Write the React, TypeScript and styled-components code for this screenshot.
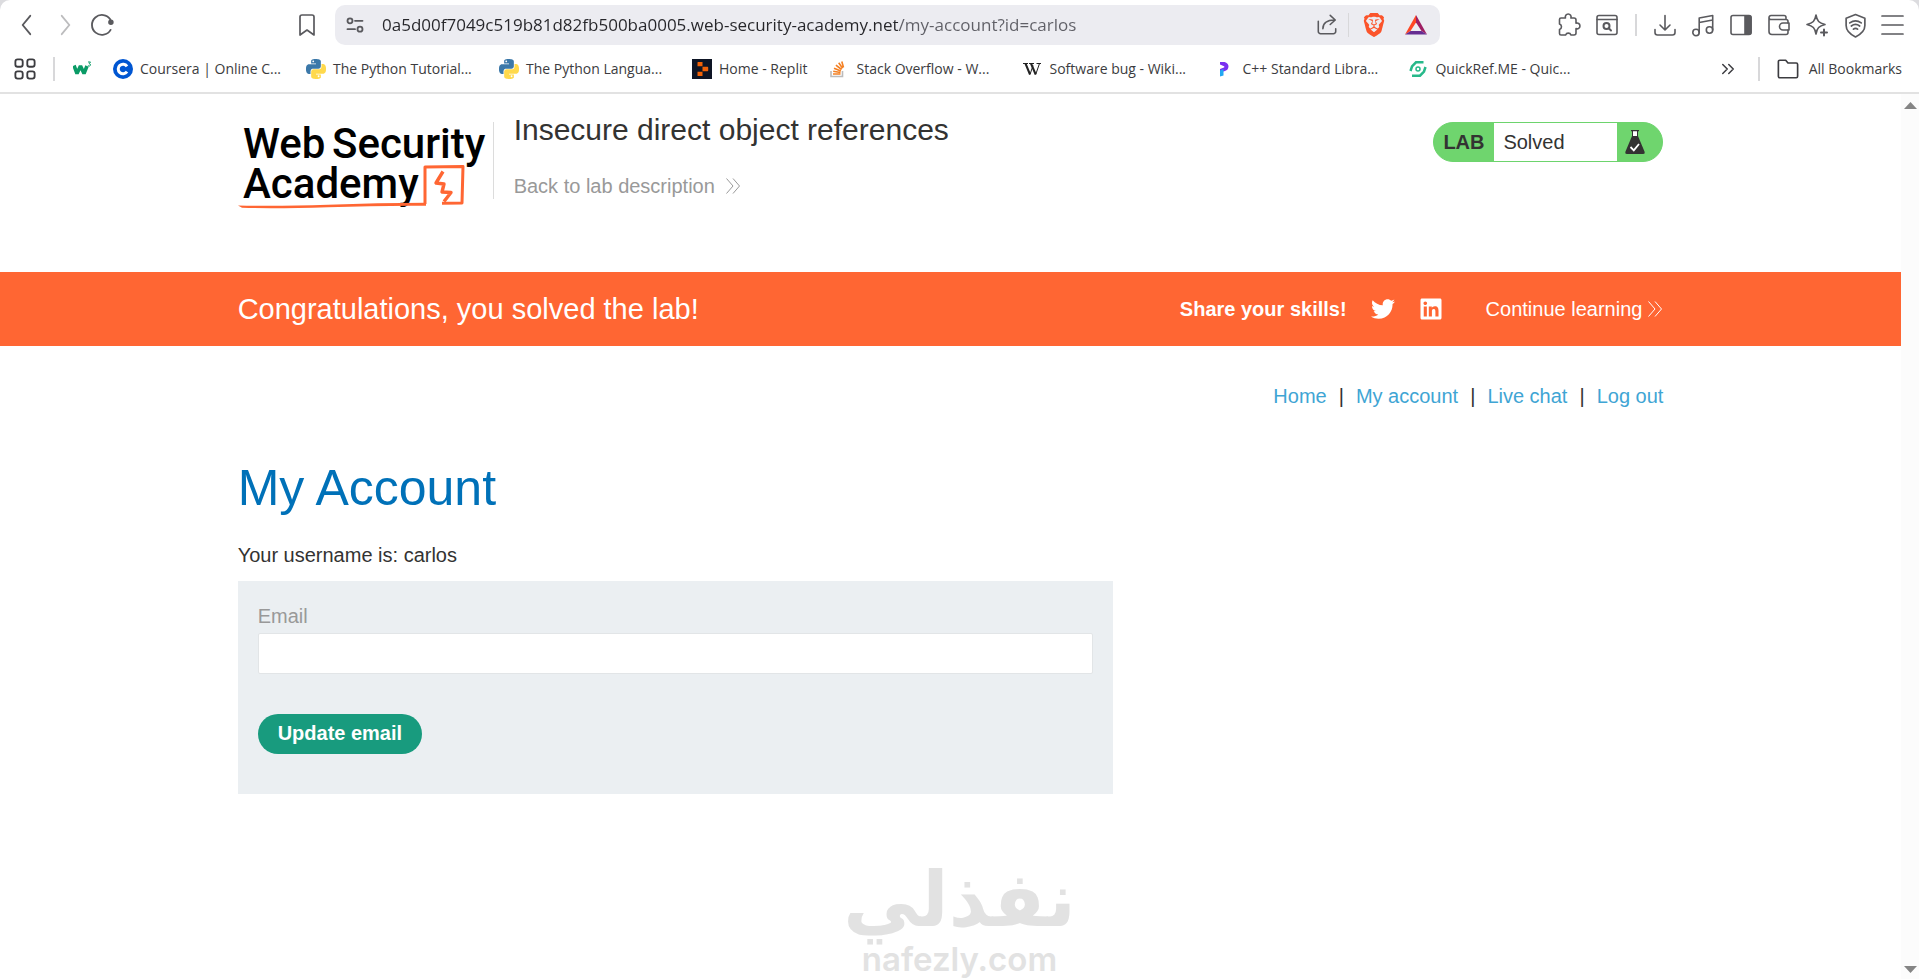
import React from 'react';
import styled, { createGlobalStyle } from 'styled-components';
import { FaTwitter, FaLinkedin } from 'react-icons/fa';
import { SiBrave } from 'react-icons/si';

const GlobalStyle = createGlobalStyle`
  *, *::before, *::after { box-sizing: border-box; }
  html, body { margin: 0; padding: 0; }
  body {
    background: #dcdcdf;
    color: #333332;
    font-family: "Liberation Sans", Arial, sans-serif;
    font-size: 20px;
    line-height: 24px;
  }
  button { font: inherit; border: 0; padding: 0; background: none; color: inherit; cursor: pointer; }
  a { text-decoration: none; color: inherit; }
  svg { display: block; flex: none; }
`;

const Window = styled.div`
  position: relative;
  min-height: 100vh;
  display: flex;
  flex-direction: column;
  background: #fff;
  border-radius: 10px 10px 0 0;
`;

/* ---------- browser chrome ---------- */

const Chrome = styled.header`
  border-bottom: 2px solid #e2e2e2;
  color: #5a5a5e;
  font-family: "Open Sans", "Noto Sans", sans-serif;
`;

const Toolbar = styled.div`
  display: flex;
  align-items: center;
  padding: 5px 13px 0 14px;
`;

const NavButtons = styled.div`
  display: flex;
  align-items: center;
  gap: 12px;
  width: 280px;
`;

const IconButton = styled.button<{ $faded?: boolean }>`
  width: 26px;
  height: 26px;
  display: flex;
  align-items: center;
  justify-content: center;
  flex: none;
  opacity: ${(p) => (p.$faded ? 0.4 : 1)};
`;

const AddressBar = styled.form`
  flex: 0 1 1105px;
  height: 40px;
  margin-left: 15px;
  padding: 0 11px 0 7px;
  display: flex;
  align-items: center;
  background: #ececf1;
  border-radius: 10px;
`;

const AddressInput = styled.input`
  flex: 1;
  min-width: 0;
  height: 32px;
  margin-left: 14px;
  padding: 0 0 2px;
  border: 0;
  outline: 0;
  color: #26262a;
  font: 17px "Open Sans", "Noto Sans", sans-serif;
  background: linear-gradient(to right, #26262a 516px, #5f5f66 516px);
  background-clip: text;
  -webkit-text-fill-color: transparent;
`;

const AddressActions = styled.div`
  display: flex;
  align-items: center;
  gap: 8px;
`;

const ShieldButtons = styled.div`
  display: flex;
  gap: 16px;
  margin-left: 4px;
`;

const Divider = styled.span<{ $h: number; $w?: number }>`
  width: ${(p) => p.$w ?? 1}px;
  height: ${(p) => p.$h}px;
  background: #d8d8da;
  flex: none;
`;

const ToolbarEnd = styled.div`
  display: flex;
  align-items: center;
  gap: 12px;
  margin-left: auto;
`;

const EndDivider = styled(Divider)`
  margin: 0 3px;
`;

const BookmarksBar = styled.nav`
  display: flex;
  align-items: center;
  height: 47px;
  padding: 0 17px 0 12px;
  color: #3c3c40;
  font-size: 14px;
  line-height: 20px;
`;

const GridDivider = styled(Divider)`
  margin: 0 18px 0 15px;
`;

const BookmarkList = styled.div`
  display: flex;
  align-items: center;
  gap: 22px;
`;

const Bookmark = styled.a<{ $gap?: number }>`
  display: flex;
  align-items: center;
  gap: ${(p) => p.$gap ?? 7}px;
  white-space: nowrap;
`;

const BookmarkLabel = styled.span<{ $cut: boolean }>`
  width: ${(p) => (p.$cut ? '144px' : 'auto')};
`;

const BookmarksEnd = styled.div`
  display: flex;
  align-items: center;
  gap: 17px;
  margin-left: auto;
`;

/* ---------- lab page ---------- */

const Viewport = styled.div`
  flex: 1;
  display: flex;
`;

const Page = styled.div`
  flex: 1;
  min-width: 0;
`;

const ScrollTrack = styled.div`
  width: 18px;
  padding: 7px 0 5px;
  display: flex;
  flex-direction: column;
  align-items: center;
  justify-content: space-between;
  background: #fcfcfc;
`;

const Container = styled.div`
  width: 75%;
  margin: 0 auto;
`;

const LabHeader = styled(Container)`
  height: 178px;
  padding-top: 25px;
  display: flex;
  align-items: flex-start;
`;

const TitleBlock = styled.div`
  margin: 3px 0 0 0;
  height: 77px;
  padding-left: 20px;
  border-left: 1px solid #dcdcdc;
  display: flex;
  flex-direction: column;
  align-items: flex-start;
`;

const LabTitle = styled.h2`
  margin: -10px 0 0;
  font-size: 30px;
  line-height: 36px;
  font-weight: 400;
`;

const BackLink = styled.a`
  display: flex;
  align-items: center;
  gap: 10px;
  margin-top: 26px;
  color: #999;
`;

const Status = styled.div`
  display: flex;
  width: 230px;
  height: 40px;
  margin: 3px 0 0 auto;
  border: 1px solid #6dd46d;
  border-radius: 20px;
  background: #6fd56e;
  overflow: hidden;
  line-height: 38px;
`;

const StatusTag = styled.strong`
  width: 60px;
  padding-left: 9px;
`;

const StatusText = styled.span`
  width: 123px;
  padding-left: 9px;
  background: #fff;
`;

const StatusIcon = styled.span`
  padding: 6px 0 0 7px;
`;

const Banner = styled.section`
  background: #ff6633;
  color: #fff;
`;

const BannerInner = styled(Container)`
  height: 74px;
  display: flex;
  align-items: center;
`;

const BannerTitle = styled.h4`
  margin: 0;
  font-size: 29px;
  font-weight: 400;
`;

const Share = styled.div`
  display: flex;
  align-items: center;
  gap: 24px;
  margin-left: auto;
  font-weight: 700;
`;

const ContinueLink = styled.a`
  display: flex;
  align-items: center;
  gap: 5px;
  margin-left: 43px;
`;

const TopLinks = styled.nav`
  display: flex;
  justify-content: flex-end;
  gap: 12px;
  padding-top: 38px;
  a { color: #3fa5d4; }
`;

const Heading = styled.h1`
  margin: 50px 0 0;
  color: #0071b8;
  font-size: 50px;
  line-height: 60px;
  font-weight: 400;
`;

const Username = styled.p`
  margin: 25px 0 14px;
`;

const EmailForm = styled.form`
  width: 61.4%;
  height: 213px;
  padding: 23px 20px 0;
  display: flex;
  flex-direction: column;
  align-items: flex-start;
  background: #ebeff2;
`;

const EmailLabel = styled.label`
  color: #999;
`;

const EmailInput = styled.input`
  width: 100%;
  height: 41px;
  margin: 5px 0 40px;
  padding: 0 10px;
  border: 1px solid #e2e5e7;
  border-radius: 2px;
  background: #fff;
  font: inherit;
`;

const SubmitButton = styled.button`
  height: 40px;
  padding: 0 20px 2px;
  border-radius: 20px;
  background: #189b7e;
  color: #fff;
  font-weight: 700;
`;

const Watermark = styled.div`
  position: absolute;
  bottom: 0;
  left: 0;
  right: 0;
  display: flex;
  flex-direction: column;
  align-items: center;
  color: #e2e2e2;
  font-weight: 700;
  pointer-events: none;
`;

const WatermarkArabic = styled.span`
  font-family: "DejaVu Sans", sans-serif;
  font-size: 76px;
  line-height: 78px;
  white-space: nowrap;
`;

const WatermarkDomain = styled.span`
  font-family: Inter, sans-serif;
  font-size: 33px;
  line-height: 40px;
  font-weight: 600;
`;

/* ---------- icons ---------- */

const Line = ({
  size = 24,
  width = 2,
  children,
}: {
  size?: number;
  width?: number;
  children: React.ReactNode;
}) => (
  <svg
    width={size}
    height={size}
    viewBox="0 0 24 24"
    fill="none"
    stroke="currentColor"
    strokeWidth={width}
    strokeLinecap="round"
    strokeLinejoin="round"
    aria-hidden="true"
  >
    {children}
  </svg>
);

const DoubleChevron = () => (
  <svg width="16" height="18" viewBox="0 0 16 18" fill="none" stroke="currentColor" aria-hidden="true">
    <path d="M1.5 1.5 8 9l-6.500 7.500M8 1.500 14.500 9 8 16.500" />
  </svg>
);

const PythonIcon = () => (
  <svg width="20" height="20" viewBox="0 0 24 24" aria-hidden="true">
    <path
      fill="#3b78a9"
      d="M14.25.18l.9.2.73.26.59.3.45.32.34.34.25.34.16.33.1.3.04.26.02.2-.01.13V8.5l-.05.63-.13.55-.21.46-.26.38-.3.31-.33.25-.35.19-.35.14-.33.1-.3.07-.26.04-.21.02H8.77l-.69.05-.59.14-.5.22-.41.27-.33.32-.27.35-.2.36-.15.37-.1.35-.07.32-.04.27-.02.21v3.06H3.17l-.21-.03-.28-.07-.32-.12-.35-.18-.36-.26-.36-.36-.35-.46-.32-.59-.28-.73-.21-.88-.14-1.05-.05-1.23.06-1.22.16-1.04.24-.87.32-.71.36-.57.4-.44.42-.33.42-.24.4-.16.36-.1.32-.05.24-.01h.16l.06.01h8.16v-.83H6.18l-.01-2.75-.02-.37.05-.34.11-.31.17-.28.25-.26.31-.23.38-.2.44-.18.51-.15.58-.12.64-.1.71-.06.77-.04.84-.02 1.27.05zm-6.3 1.98l-.23.33-.08.41.08.41.23.34.33.22.41.09.41-.09.33-.22.23-.34.08-.41-.08-.41-.23-.33-.33-.22-.41-.09-.41.09z"
    />
    <path
      fill="#ffd94c"
      d="M21.04 6.11l.28.06.32.12.35.18.36.27.36.35.35.47.32.59.28.73.21.88.14 1.04.05 1.23-.06 1.23-.16 1.04-.24.86-.32.71-.36.57-.4.45-.42.33-.42.24-.4.16-.36.09-.32.05-.24.02-.16-.01h-8.22v.82h5.84l.01 2.76.02.36-.05.34-.11.31-.17.29-.25.25-.31.24-.38.2-.44.17-.51.15-.58.13-.64.09-.71.07-.77.04-.84.01-1.27-.04-1.07-.14-.9-.2-.73-.25-.59-.3-.45-.33-.34-.34-.25-.34-.16-.33-.1-.3-.04-.25-.02-.2.01-.13v-5.34l.05-.64.13-.54.21-.46.26-.38.3-.32.33-.24.35-.2.35-.14.33-.1.3-.06.26-.04.21-.02.13-.01h5.84l.69-.05.59-.14.5-.21.41-.28.33-.32.27-.35.2-.36.15-.36.1-.35.07-.32.04-.28.02-.21V6.07h2.09l.14.01z"
    />
    <circle cx="15.1" cy="20.700" r="1.100" fill="#fff" />
  </svg>
);

const W3Icon = () => (
  <svg width="18" height="20" viewBox="0 0 18 20" aria-hidden="true">
    <path d="M1 6.500 4 14.500 7.500 7l3.500 7.500L14 7" fill="none" stroke="#0a9b66" strokeWidth="3.600" strokeLinejoin="bevel" />
    <path d="M15 3h2.500l-1.300 1.700q1.800.3 1.200 1.700-.7 1.100-2.500.4" fill="none" stroke="#0a9b66" />
  </svg>
);

const CourseraIcon = () => (
  <svg width="20" height="20" viewBox="0 0 20 20" aria-hidden="true">
    <circle cx="10" cy="10" r="10" fill="#0056d2" />
    <path d="M14 7.300a4.800 4.800 0 1 0 0 5.400" fill="none" stroke="#fff" strokeWidth="3" />
  </svg>
);

const ReplitIcon = () => (
  <svg width="20" height="20" viewBox="0 0 20 20" aria-hidden="true">
    <path fill="#0e1525" d="M0 0h20v20H0z" />
    <path fill="#f26207" d="M6 3h4.500v4.300H5.500V3.500Q5.500 3 6 3zM10.500 7.700h5q.7 0 .7.700v3.200q0 .7-.7.700h-5zM5.500 12.700h5V17H6q-.5 0-.5-.5z" />
  </svg>
);

const StackOverflowIcon = () => (
  <svg width="20" height="20" viewBox="0 0 20 20" fill="none" strokeWidth="1.600" aria-hidden="true">
    <path d="M2 12v5.500h11.500V12" stroke="#bcbbbb" />
    <path d="M4 15h7.500M4.200 12.200l7.300 1.300M5 9.200l6.800 2.900M6.900 6.100l5.700 4.400M9.700 3.800l3.900 5.400M12.800 2.500l1.700 6" stroke="#f48023" />
  </svg>
);

const WikiIcon = () => (
  <svg width="20" height="20" viewBox="0 0 20 20" fill="none" stroke="#222" aria-hidden="true">
    <path strokeWidth="2" d="M3.500 4.500 8 15.500M9 4.500l4.700 11" />
    <path d="M1 4.500h5M7 4.500h5M14.500 4.500H19M17.500 4.500l-3.800 11M11 6.500l-3 9" />
  </svg>
);

const CppIcon = () => (
  <svg width="20" height="20" viewBox="0 0 20 20" aria-hidden="true">
    <path d="M5 3h4.500q4 1 4 4.500-.2 3.500-3.500 4.500l-5 1.500V10l4-1.500q1-.4 0-1.200L5 5.500z" fill="#7a2ff0" />
    <path d="M5 11.500 8.500 10v6.500L5 17.500z" fill="#22a7f2" />
  </svg>
);

const QuickRefIcon = () => (
  <svg width="20" height="20" viewBox="0 0 20 20" fill="none" stroke="#27b98a" strokeWidth="2.500" aria-hidden="true">
    <path d="M15.500 3.300H8L4 7.500 2.500 12M4 16.700h8l4-4.200L17.500 8" />
    <circle cx="10" cy="10" r="2" strokeWidth="1.500" />
  </svg>
);

const BackIcon = () => <Line size={26} width={1.7}><path d="M15 3.500 8 12l7 8.500" /></Line>;
const ForwardIcon = () => <Line size={26} width={1.7}><path d="m9 3.500 7 8.500-7 8.500" /></Line>;
const ReloadIcon = () => (
  <Line size={26} width={1.7}>
    <path d="M19 16.500A9.200 9.200 0 1 1 18.800 7" />
    <circle cx="19.300" cy="9.500" r="1.700" fill="currentColor" />
  </Line>
);
const BookmarkIcon = () => <Line size={24} width={1.7}><path d="M5 4a2 2 0 0 1 2-2h10a2 2 0 0 1 2 2v18l-7-5-7 5z" /></Line>;
const TuneIcon = () => (
  <Line size={20} width={2.2}>
    <circle cx="6" cy="7" r="3" /><path d="M12 7h9M3 17h9" /><circle cx="18" cy="17" r="3" />
  </Line>
);
const ShareIcon = () => (
  <Line size={22} width={1.7}>
    <path d="M2.500 8v11a2.500 2.500 0 0 0 2.500 2.500h14a2.500 2.500 0 0 0 2.500-2.500v-3M7.500 16c0-6 4-9.500 13-9.500M15.500 1.500l5.500 5-5.500 5" />
  </Line>
);
const BatIcon = () => (
  <svg width="24" height="22" viewBox="0 0 24 22" aria-hidden="true">
    <path fill="#ff4724" d="M12 1v7.500L6.500 17 1 20.500z" />
    <path fill="#9e1f63" d="m12 1 11 19.500-5.500-3.500L12 8.500z" />
    <path fill="#662d91" d="M1 20.500 6.500 17h11l5.500 3.500z" />
  </svg>
);
const PuzzleIcon = () => (
  <Line width={1.6}>
    <path d="M4 5h4.500a2.900 2.900 0 1 1 5.400 0H17a2 2 0 0 1 2 2v3.200a2.900 2.900 0 1 1 0 5.400V20a2 2 0 0 1-2 2h-3a2.900 2.900 0 0 0-5.400 0H4a1.500 1.500 0 0 1-1.500-1.500v-4a2.900 2.900 0 0 0 0-5.500V6.500A1.500 1.500 0 0 1 4 5z" />
  </Line>
);
const FindIcon = () => (
  <Line width={1.6}>
    <rect x="2" y="2.500" width="20" height="19" rx="2" /><path d="M2 6.500h20" /><circle cx="11.500" cy="13" r="3" strokeWidth={2} /><path d="m14 15.500 2 2" strokeWidth={2} />
  </Line>
);
const DownloadIcon = () => <Line width={1.6}><path d="M12 2.500v14M7 12l5 5 5-5M2 16.500v3A2.500 2.500 0 0 0 4.500 22h15a2.500 2.500 0 0 0 2.500-2.500v-3" /></Line>;
const MusicIcon = () => (
  <Line width={1.6}>
    <circle cx="5" cy="19.500" r="3.200" /><circle cx="18.500" cy="17" r="3.200" /><path d="M8.200 19.500V5l13.500-2.500V17M8.200 9.500l13.500-2.500" />
  </Line>
);
const PanelIcon = () => (
  <Line width={1.6}>
    <rect x="2" y="2.500" width="20" height="19" rx="2" /><path d="M16 3h4.500a1.500 1.500 0 0 1 1.500 1.500v15a1.500 1.500 0 0 1-1.500 1.500H16z" fill="currentColor" />
  </Line>
);
const WalletIcon = () => (
  <Line width={1.6}>
    <path d="M19 6.500V4.500a2 2 0 0 0-2-2H4a2 2 0 0 0-2 2v14a3 3 0 0 0 3 3h14a2 2 0 0 0 2-2v-2.500M2 4.500a2 2 0 0 0 2 2h15a2 2 0 0 1 2 2V10" />
    <path d="M22 10h-6a3.500 3.500 0 0 0 0 7h6z" />
  </Line>
);
const SparkleIcon = () => (
  <Line width={1.6}>
    <path d="M11 2c1 6 3 8 9 9.500-6 1.500-8 3.500-9 9.500-1-6-3-8-9-9.500 6-1.500 8-3.500 9-9.500z" /><path d="M19 16.500v6M16 19.500h6" strokeWidth={2} />
  </Line>
);
const VpnIcon = () => (
  <Line size={25} width={1.6}>
    <path d="m12 1.500 9 3.500v7c0 5-4 8.500-9 11-5-2.500-9-6-9-11V5z" /><path d="M6.500 9.500q5.500-4 11 0M8 12.500q4-3 8 0M10 15.500q2-1.500 4 0" />
  </Line>
);
const MenuIcon = () => <Line width={1.7}><path d="M1 3h21M1 12h21M1 21h21" /></Line>;
const GridIcon = () => (
  <Line size={22} width={2}>
    <rect x="1.500" y="1.500" width="8" height="8" rx="2.500" /><rect x="14.500" y="1.500" width="8" height="8" rx="2.500" />
    <rect x="1.500" y="14.500" width="8" height="8" rx="2.500" /><rect x="14.500" y="14.500" width="8" height="8" rx="2.500" />
  </Line>
);
const MoreIcon = () => <Line size={18} width={2}><path d="m5 6 6 6-6 6M13 6l6 6-6 6" /></Line>;
const FolderIcon = () => <Line size={22} width={1.8}><path d="M1.500 4a1.500 1.500 0 0 1 1.500-1.500h6.500l2.500 3h9a1.500 1.500 0 0 1 1.500 1.500v13a1.500 1.500 0 0 1-1.500 1.500H3a1.500 1.500 0 0 1-1.500-1.500z" /></Line>;

const FlaskIcon = () => (
  <svg width="22" height="26" viewBox="0 0 22 26" aria-hidden="true">
    <path fill="#fff" d="M8.500 2h5v5h-5z" />
    <path fill="#333332" d="M7 1h8v1.200h-1V7l6.700 16q.5 2-1.500 2H2.800q-2 0-1.500-2L8 7V2.200H7zM9 2.200V7h4V2.200z" />
    <path fill="none" stroke="#fff" strokeWidth="1.800" d="m6.500 18 3.300 3.300L15 15" />
  </svg>
);

const AcademyLogo = () => (
  <svg width="255" height="92" viewBox="0 0 255 92" role="img" aria-label="Web Security Academy">
    <g fill="#000" fontFamily="Roboto, sans-serif" fontWeight="500" fontSize="42">
      <text x="5" y="39">Web</text>
      <text x="94" y="39">Security</text>
      <text x="5" y="79">Academy</text>
    </g>
    <g fill="none" stroke="#ff6633" strokeWidth="3" strokeLinejoin="round">
      <path d="M187 85V48l38-.5-1 36.500-20 .3" />
      <path d="M205 52.500 198 64l8 1-2 8 9 .5-7 9" strokeWidth="3.400" />
    </g>
    <path fill="#ff6633" d="M0 86.500q40 1 90-.8 50-2 98-2v3q-50-.3-98 1.500-50 1.500-86 .6z" />
  </svg>
);

const Arrow = ({ down }: { down?: boolean }) => (
  <svg width="13" height="9" viewBox="0 0 13 9" aria-hidden="true">
    <path fill="#858585" d={down ? 'M0 1h13L6.500 8z' : 'M0 8h13L6.500 1z'} />
  </svg>
);

const bookmarks: { label: string; icon: React.ReactNode }[] = [
  { label: 'Coursera | Online C...', icon: <CourseraIcon /> },
  { label: 'The Python Tutorial...', icon: <PythonIcon /> },
  { label: 'The Python Langua...', icon: <PythonIcon /> },
  { label: 'Home - Replit', icon: <ReplitIcon /> },
  { label: 'Stack Overflow - W...', icon: <StackOverflowIcon /> },
  { label: 'Software bug - Wiki...', icon: <WikiIcon /> },
  { label: 'C++ Standard Libra...', icon: <CppIcon /> },
  { label: 'QuickRef.ME - Quic...', icon: <QuickRefIcon /> },
];

const tools: [string, React.ReactNode][] = [
  ['Downloads', <DownloadIcon />],
  ['Media', <MusicIcon />],
  ['Sidebar', <PanelIcon />],
  ['Wallet', <WalletIcon />],
  ['Assistant', <SparkleIcon />],
  ['VPN', <VpnIcon />],
  ['Menu', <MenuIcon />],
];

export default function App() {
  return (
    <>
      <GlobalStyle />
      <Window>
        <Chrome>
          <Toolbar>
            <NavButtons>
              <IconButton aria-label="Back"><BackIcon /></IconButton>
              <IconButton aria-label="Forward" $faded><ForwardIcon /></IconButton>
              <IconButton aria-label="Reload"><ReloadIcon /></IconButton>
            </NavButtons>
            <IconButton aria-label="Bookmark this page"><BookmarkIcon /></IconButton>
            <AddressBar onSubmit={(e) => e.preventDefault()}>
              <IconButton type="button" aria-label="Site settings"><TuneIcon /></IconButton>
              <AddressInput
                aria-label="Address"
                defaultValue="0a5d00f7049c519b81d82fb500ba0005.web-security-academy.net/my-account?id=carlos"
              />
              <AddressActions>
                <IconButton type="button" aria-label="Share"><ShareIcon /></IconButton>
                <Divider $h={24} />
                <ShieldButtons>
                  <IconButton type="button" aria-label="Shields"><SiBrave size={24} color="#fb542b" /></IconButton>
                  <IconButton type="button" aria-label="Rewards"><BatIcon /></IconButton>
                </ShieldButtons>
              </AddressActions>
            </AddressBar>
            <ToolbarEnd>
              <IconButton aria-label="Extensions"><PuzzleIcon /></IconButton>
              <IconButton aria-label="Search in page"><FindIcon /></IconButton>
              <EndDivider $h={22} $w={2} />
              {tools.map(([name, icon]) => (
                <IconButton key={name} aria-label={name}>{icon}</IconButton>
              ))}
            </ToolbarEnd>
          </Toolbar>
          <BookmarksBar aria-label="Bookmarks">
            <IconButton aria-label="Tab groups"><GridIcon /></IconButton>
            <GridDivider $h={24} $w={2} />
            <BookmarkList>
              <Bookmark href="#" aria-label="W3Schools"><W3Icon /></Bookmark>
              {bookmarks.map((b) => (
                <Bookmark key={b.label} href="#">
                  {b.icon}
                  <BookmarkLabel $cut={b.label.endsWith('...')}>{b.label}</BookmarkLabel>
                </Bookmark>
              ))}
            </BookmarkList>
            <BookmarksEnd>
              <IconButton aria-label="More bookmarks"><MoreIcon /></IconButton>
              <Divider $h={24} $w={2} />
              <Bookmark href="#" $gap={10}><FolderIcon />All Bookmarks</Bookmark>
            </BookmarksEnd>
          </BookmarksBar>
        </Chrome>

        <Viewport>
          <Page>
            <LabHeader>
              <AcademyLogo />
              <TitleBlock>
                <LabTitle>Insecure direct object references</LabTitle>
                <BackLink href="#">Back to lab description <DoubleChevron /></BackLink>
              </TitleBlock>
              <Status>
                <StatusTag>LAB</StatusTag>
                <StatusText>Solved</StatusText>
                <StatusIcon><FlaskIcon /></StatusIcon>
              </Status>
            </LabHeader>

            <Banner>
              <BannerInner>
                <BannerTitle>Congratulations, you solved the lab!</BannerTitle>
                <Share>
                  Share your skills!
                  <a href="#" aria-label="Twitter"><FaTwitter size={24} /></a>
                  <a href="#" aria-label="LinkedIn"><FaLinkedin size={24} /></a>
                </Share>
                <ContinueLink href="#">Continue learning <DoubleChevron /></ContinueLink>
              </BannerInner>
            </Banner>

            <Container as="main">
              <TopLinks>
                <a href="#">Home</a>
                <span>|</span>
                <a href="#">My account</a>
                <span>|</span>
                <a href="#">Live chat</a>
                <span>|</span>
                <a href="#">Log out</a>
              </TopLinks>
              <Heading>My Account</Heading>
              <Username>Your username is: carlos</Username>
              <EmailForm onSubmit={(e) => e.preventDefault()}>
                <EmailLabel htmlFor="email">Email</EmailLabel>
                <EmailInput id="email" type="email" />
                <SubmitButton type="submit">Update email</SubmitButton>
              </EmailForm>
            </Container>
          </Page>
          <ScrollTrack>
            <Arrow />
            <Arrow down />
          </ScrollTrack>
        </Viewport>

        <Watermark>
          <WatermarkArabic lang="ar" dir="rtl">نفذلي</WatermarkArabic>
          <WatermarkDomain>nafezly.com</WatermarkDomain>
        </Watermark>
      </Window>
    </>
  );
}
